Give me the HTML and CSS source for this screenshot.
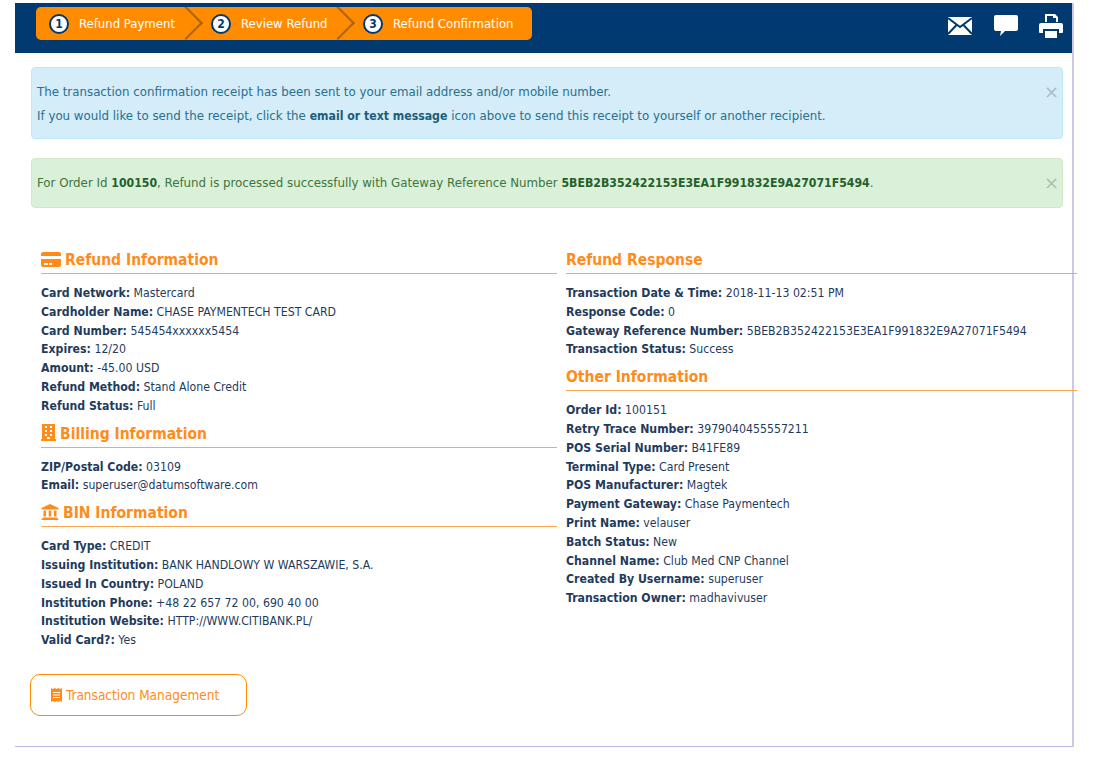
FILE: index.html
```html
<!DOCTYPE html>
<html lang="en">
<head>
  <meta charset="UTF-8" />
  <title>Refund Confirmation</title>
  <link rel="stylesheet" href="styles.css">
</head>
<body>
  <div class="shell">
    <header class="topbar">
      <ol class="steps">
        <li class="step"><span class="step-num">1</span>Refund Payment</li>
        <li class="step"><span class="step-num">2</span>Review Refund</li>
        <li class="step"><span class="step-num">3</span>Refund Confirmation</li>
      </ol>
      <div class="actions">
        <svg class="act-icon" width="24" height="18" viewBox="0 0 24 18"><path fill="#fff" d="M0 0h24v18H0z"/><path fill="none" stroke="#003a70" stroke-width="2" d="M0 1l12 9 12-9M0 17l9-9.5M24 17l-9-9.5"/></svg>
        <svg class="act-icon" width="24" height="22" viewBox="0 0 24 22"><path fill="#fff" d="M2 0h20a2 2 0 0 1 2 2v12a2 2 0 0 1-2 2H11l-5 5 1-5H2a2 2 0 0 1-2-2V2a2 2 0 0 1 2-2z"/></svg>
        <svg class="act-icon" width="24" height="24" viewBox="0 0 24 24"><path fill="#fff" d="M6 0h10l3 3v5h-2V4h-3V2H8v6H6zM2 9h20a2 2 0 0 1 2 2v7a1 1 0 0 1-1 1h-3v-4H4v4H1a1 1 0 0 1-1-1v-7a2 2 0 0 1 2-2zM6 17h12v7H6z"/></svg>
      </div>
    </header>

    <div class="alert alert-info">
      <button class="alert-close">×</button>
      <p>The transaction confirmation receipt has been sent to your email address and/or mobile number.</p>
      <p>If you would like to send the receipt, click the <strong>email or text message</strong> icon above to send this receipt to yourself or another recipient.</p>
    </div>
    <div class="alert alert-success">
      <button class="alert-close">×</button>
      <p>For Order Id <strong>100150</strong>, Refund is processed successfully with Gateway Reference Number <strong>5BEB2B352422153E3EA1F991832E9A27071F5494</strong>.</p>
    </div>

    <div class="details">
      <div class="col col-left">
        <h2 class="sec-title">
          <svg width="20" height="15" viewBox="0 0 20 15"><path fill="#ff8c1a" d="M2 0h16a2 2 0 0 1 2 2v2H0V2a2 2 0 0 1 2-2zM0 7h20v6a2 2 0 0 1-2 2H2a2 2 0 0 1-2-2zm3 4v2h4v-2zm5 0v2h3v-2z"/></svg>
          Refund Information
        </h2>
        <div class="row"><b>Card Network:</b> Mastercard</div>
        <div class="row"><b>Cardholder Name:</b> CHASE PAYMENTECH TEST CARD</div>
        <div class="row"><b>Card Number:</b> 545454xxxxxx5454</div>
        <div class="row"><b>Expires:</b> 12/20</div>
        <div class="row"><b>Amount:</b> -45.00 USD</div>
        <div class="row"><b>Refund Method:</b> Stand Alone Credit</div>
        <div class="row"><b>Refund Status:</b> Full</div>

        <h2 class="sec-title">
          <svg width="15" height="17" viewBox="0 0 15 17"><path fill="#ff8c1a" fill-rule="evenodd" d="M1 0h13v15h1v2H0v-2h1zM4 2v2h2V2zm5 0v2h2V2zM4 6v2h2V6zm5 0v2h2V6zm-5 4v2h2v-2zm5 0v2h2v-2zm-3 3v2h3v-2z"/></svg>
          Billing Information
        </h2>
        <div class="row"><b>ZIP/Postal Code:</b> 03109</div>
        <div class="row"><b>Email:</b> superuser@datumsoftware.com</div>

        <h2 class="sec-title">
          <svg width="18" height="16" viewBox="0 0 17 16"><path fill="#ff8c1a" d="M8.500 0L17 4v1.500H0V4zM2 6.500h2.500v6H2zM7.200 6.500h2.600v6H7.200zM12.500 6.500H15v6h-2.500zM1 13.500h15V15H1zM0 15h17v1H0z"/></svg>
          BIN Information
        </h2>
        <div class="row"><b>Card Type:</b> CREDIT</div>
        <div class="row"><b>Issuing Institution:</b> BANK HANDLOWY W WARSZAWIE, S.A.</div>
        <div class="row"><b>Issued In Country:</b> POLAND</div>
        <div class="row"><b>Institution Phone:</b> +48 22 657 72 00, 690 40 00</div>
        <div class="row"><b>Institution Website:</b> HTTP://WWW.CITIBANK.PL/</div>
        <div class="row"><b>Valid Card?:</b> Yes</div>
      </div>

      <div class="col col-right">
        <h2 class="sec-title">Refund Response</h2>
        <div class="row"><b>Transaction Date &amp; Time:</b> 2018-11-13 02:51 PM</div>
        <div class="row"><b>Response Code:</b> 0</div>
        <div class="row"><b>Gateway Reference Number:</b> 5BEB2B352422153E3EA1F991832E9A27071F5494</div>
        <div class="row"><b>Transaction Status:</b> Success</div>

        <h2 class="sec-title">Other Information</h2>
        <div class="row"><b>Order Id:</b> 100151</div>
        <div class="row"><b>Retry Trace Number:</b> 3979040455557211</div>
        <div class="row"><b>POS Serial Number:</b> B41FE89</div>
        <div class="row"><b>Terminal Type:</b> Card Present</div>
        <div class="row"><b>POS Manufacturer:</b> Magtek</div>
        <div class="row"><b>Payment Gateway:</b> Chase Paymentech</div>
        <div class="row"><b>Print Name:</b> velauser</div>
        <div class="row"><b>Batch Status:</b> New</div>
        <div class="row"><b>Channel Name:</b> Club Med CNP Channel</div>
        <div class="row"><b>Created By Username:</b> superuser</div>
        <div class="row"><b>Transaction Owner:</b> madhavivuser</div>
      </div>
    </div>

    <a class="btn-outline" href="#">
      <svg width="11" height="14" viewBox="0 0 11 14"><path fill="#ff8c1a" fill-rule="evenodd" d="M0 0l1.800 1L3.700 0l1.800 1L7.300 0l1.900 1L11 0v14l-1.800-1-1.900 1-1.800-1-1.800 1-1.900-1L0 14zM2 4v1h7V4zm0 2.500v1h7v-1zM2 9v1h7V9z"/></svg>
      Transaction Management
    </a>
  </div>
</body>
</html>
```
FILE: styles.css
```css
body {
  margin: 0;
  padding: 3px 0 0 15px;
  background-color: #fff;
  font-family: "DejaVu Sans Condensed", "DejaVu Sans", sans-serif;
  font-size: 12.2px;
  color: #1f3b5c;
}
.shell {
  width: 1059px;
  height: 744px;
  box-sizing: border-box;
  border-right: 2px solid #c9c9ea;
  border-bottom: 1px solid #b9b9e2;
}
.topbar {
  display: flex;
  justify-content: space-between;
  align-items: flex-start;
  height: 50px;
  padding: 4px 9px 0 21px;
  box-sizing: border-box;
  background-color: #003a70;
}
.steps {
  display: flex;
  margin: 0;
  padding: 0;
  list-style: none;
  height: 33px;
  width: 496px;
  background-color: #ff8c00;
  border-radius: 5px;
  overflow: hidden;
  font-size: 13px;
}
.step {
  position: relative;
  display: flex;
  align-items: center;
  padding-left: 13px;
  color: #fff;
  width: 162px;
  box-sizing: border-box;
}
.step + .step { width: 152px; }
.step:last-child { width: auto; }
.step:not(:last-child)::after {
  content: "";
  position: absolute;
  right: 0;
  top: 4px;
  width: 24px;
  height: 24px;
  transform: rotate(45deg);
  border-top: 2px solid #a9650f;
  border-right: 2px solid #a9650f;
  box-sizing: border-box;
}
.step-num {
  width: 20px;
  height: 20px;
  box-sizing: border-box;
  margin-right: 10px;
  border-radius: 50%;
  border: 2px solid #003a70;
  background-color: #fff;
  color: #003a70;
  font-weight: bold;
  font-size: 12px;
  display: flex;
  align-items: center;
  justify-content: center;
}
.actions {
  display: flex;
  align-items: center;
  gap: 21.5px;
  padding-top: 7px;
}
.alert {
  position: relative;
  margin: 14px 9px 0 16px;
  padding: 0 5px;
  border: 1px solid;
  border-radius: 4px;
  font-size: 13.15px;
  line-height: 24px;
}
.alert p { margin: 0; }
.alert strong { font-size: 12.2px; }
.alert-info {
  height: 72px;
  box-sizing: border-box;
  padding-top: 12px;
  background-color: #d4edf9;
  border-color: #bcebf6;
  color: #2a6f8e;
}
.alert-info strong { color: #1b5d78; }
.alert-success {
  margin-top: 19px;
  height: 50px;
  box-sizing: border-box;
  padding-top: 12px;
  background-color: #dbf0d8;
  border-color: #d2e9c8;
  color: #3c763d;
}
.alert-success strong { color: #24602a; }
.alert-close {
  position: absolute;
  right: 3px;
  top: 15px;
  padding: 0;
  border: 0;
  background: none;
  color: #000;
  opacity: 0.2;
  font-family: "DejaVu Sans", sans-serif;
  font-size: 18px;
  line-height: 18px;
}
.details {
  display: flex;
  margin-top: 34px;
  padding-left: 26px;
}
.col-left {
  width: 516px;
  flex: none;
}
.col-right {
  width: 511px;
  flex: none;
  margin-left: 9px;
  margin-right: -100px;
}
.sec-title {
  display: flex;
  align-items: flex-end;
  gap: 4px;
  height: 28px;
  padding-bottom: 3px;
  margin: 0 0 10px;
  border-bottom: 1px solid #fba84f;
  color: #ff8c1a;
  font-size: 15.5px;
  font-weight: bold;
  line-height: 20px;
}
.sec-title svg { margin-bottom: 3px; }
.row {
  line-height: 18.8px;
  height: 18.8px;
  white-space: nowrap;
}
.btn-outline {
  display: inline-flex;
  align-items: center;
  gap: 4px;
  box-sizing: border-box;
  width: 217px;
  height: 42px;
  margin: 24px 0 0 15px;
  padding-left: 20px;
  border: 1px solid #ff8c00;
  border-radius: 10px;
  color: #ff8c1a;
  font-size: 13.5px;
  text-decoration: none;
}
```
